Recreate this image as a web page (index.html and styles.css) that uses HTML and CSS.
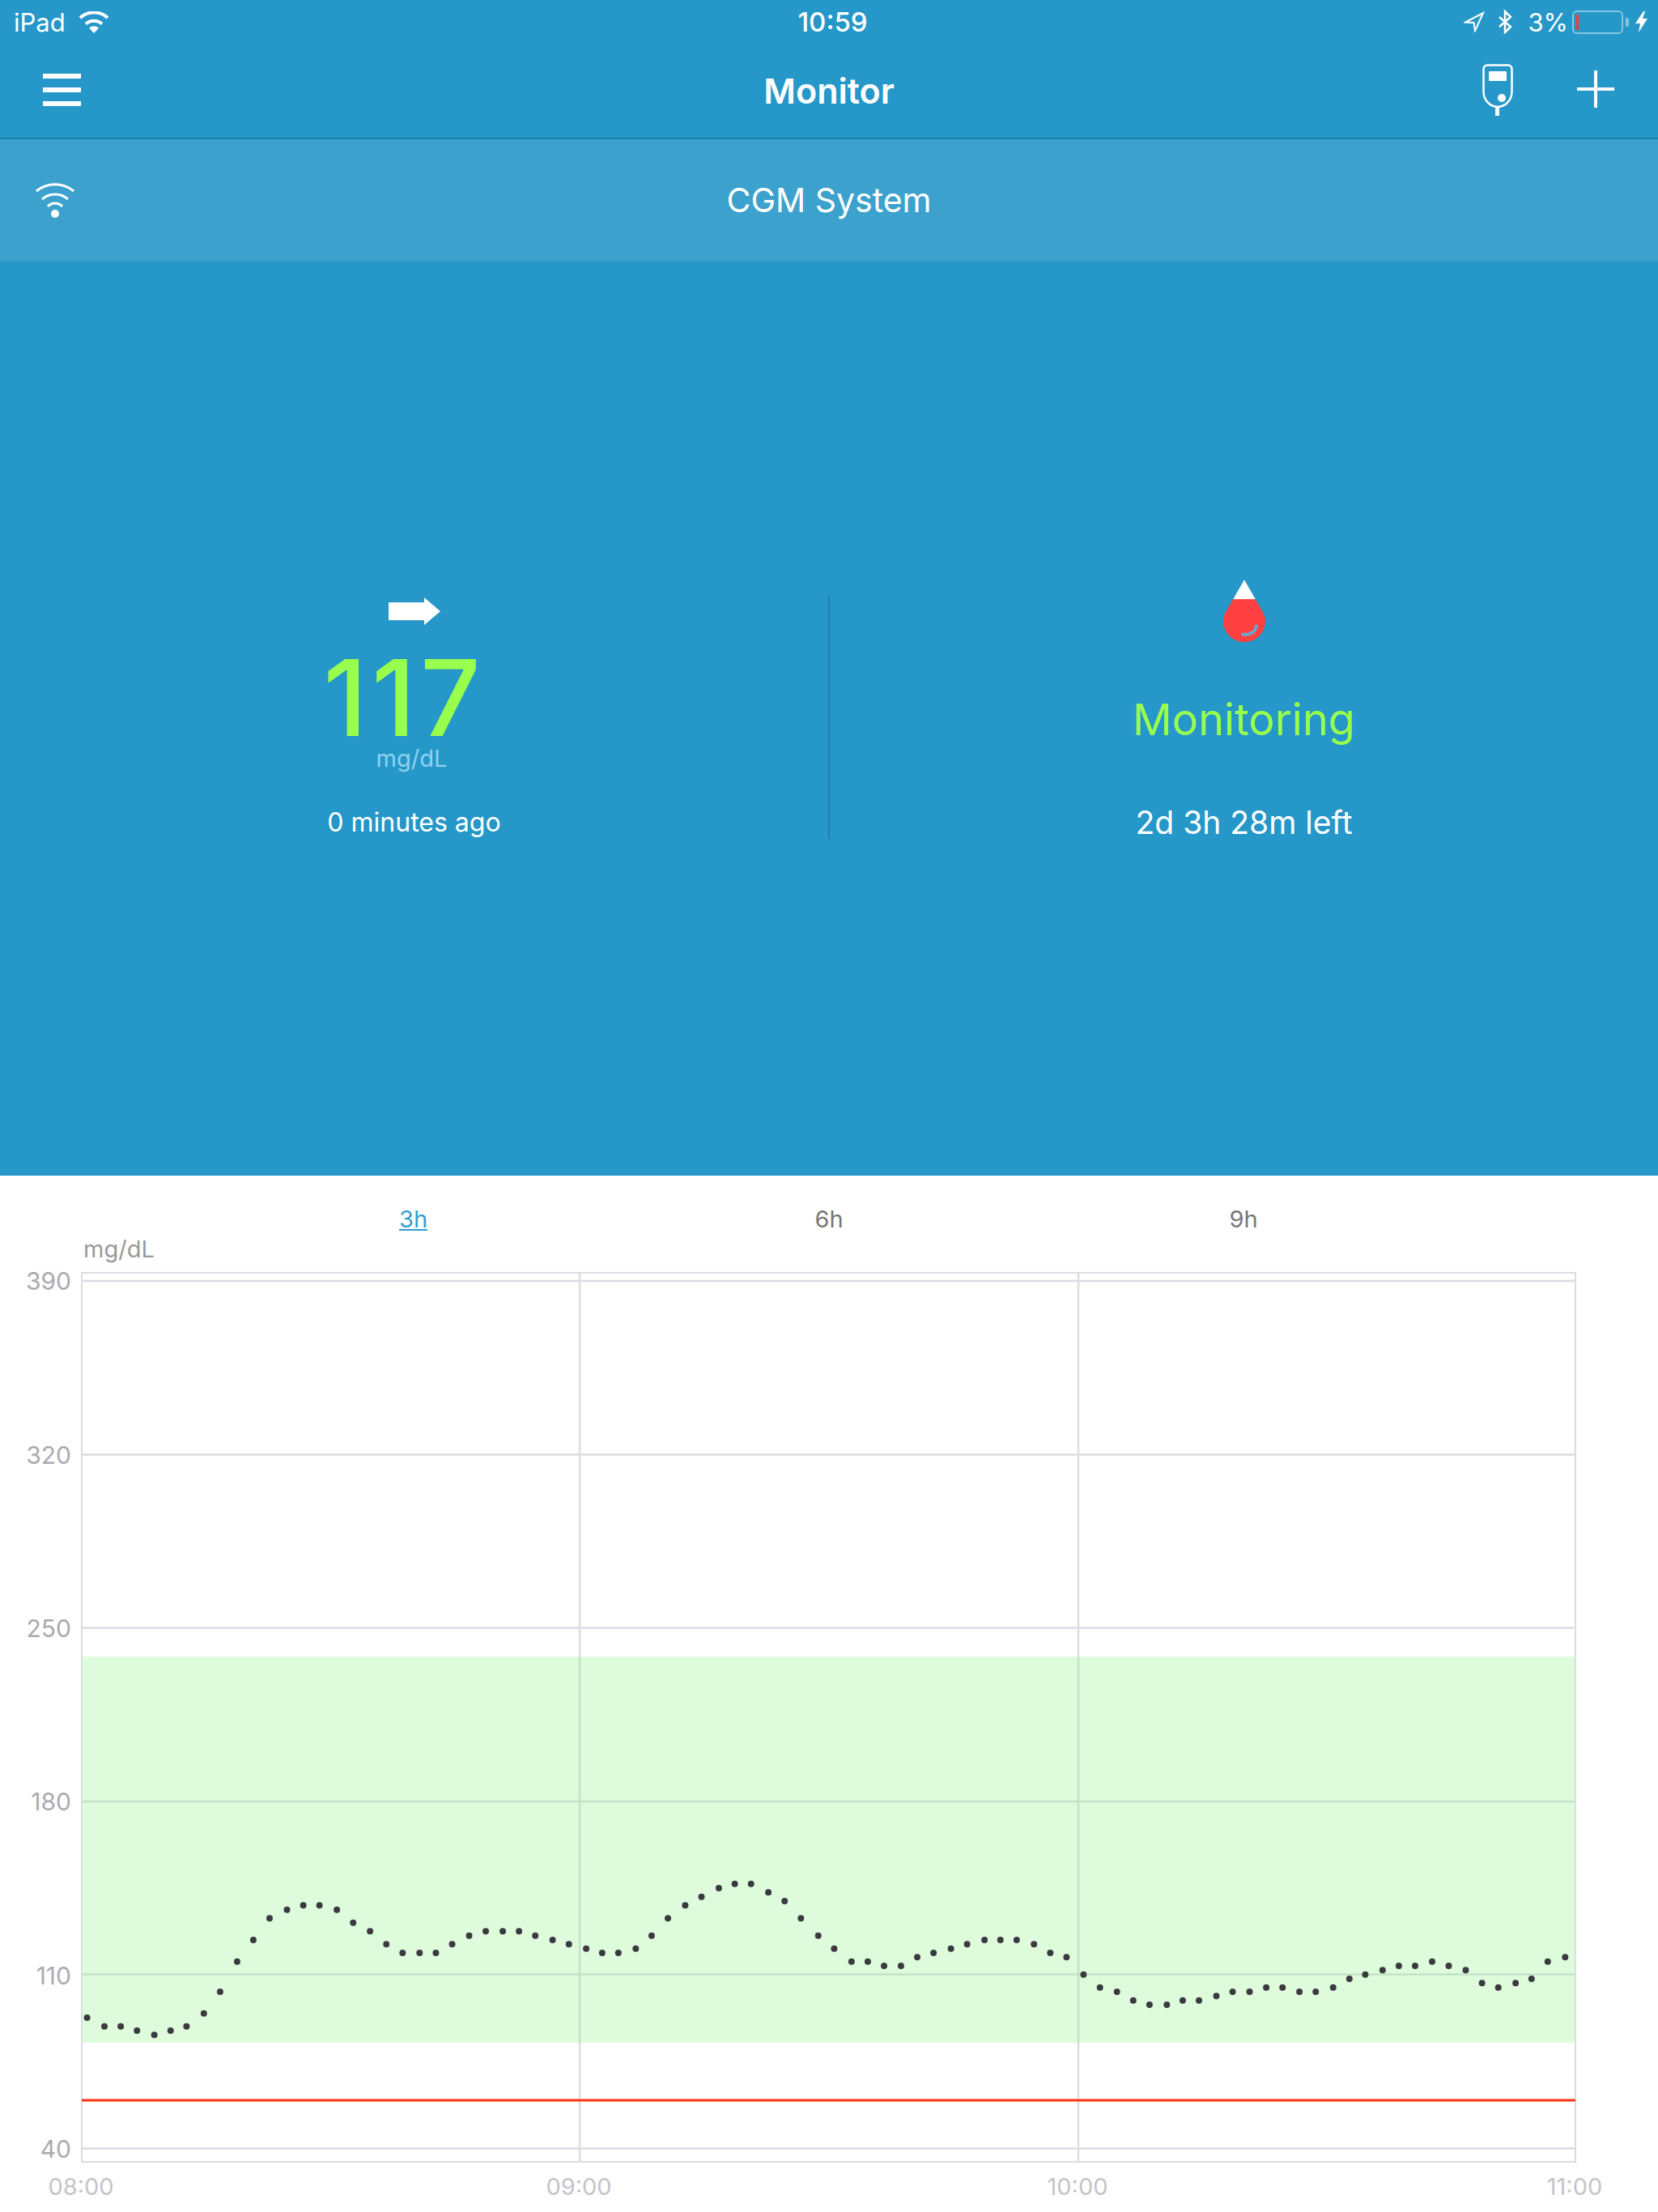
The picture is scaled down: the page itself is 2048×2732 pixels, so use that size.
FILE: index.html
```html
<!DOCTYPE html>
<html lang="en">

<head>
    <meta charset="UTF-8">
    <meta name="viewport" content="width=device-width, initial-scale=1.0">
    <title>Monitor</title>
    <link rel="stylesheet" href="styles.css">
</head>

<body>
    <div class="app">
        <div class="status-bar">
            <div class="status-left">
                <span>iPad</span>
                <svg class="status-wifi" width="38" height="27" viewBox="0 0 38 27">
                    <path class="line" stroke-width="4" d="M2 8A25 25 0 0 1 36 8"/>
                    <path class="line" stroke-width="4" d="M9 15.500A15 15 0 0 1 29 15.500"/>
                    <path class="solid" d="M13 20.500A9 9 0 0 1 25 20.500L19 27Z"/>
                </svg>
            </div>
            <div class="status-time">10:59</div>
            <div class="status-right">
                <svg width="26" height="26" viewBox="0 0 26 26">
                    <path class="line" stroke-width="2" d="M2 13.500L24 2L14 24L12.500 14Z"/>
                </svg>
                <svg class="status-bt" width="18" height="30" viewBox="0 0 18 30">
                    <path class="line" stroke-width="2.500" d="M2 9L16 21L9 28V2L16 9L2 21"/>
                </svg>
                <span class="status-pct">3%</span>
                <div class="battery"><div class="battery-level"></div></div>
                <div class="battery-nub"></div>
                <svg class="status-bolt" width="15" height="26" viewBox="0 0 15 26">
                    <path class="solid" d="M10 0L0 15H6L4 26L15 9H9L12 0Z"/>
                </svg>
            </div>
        </div>

        <div class="nav-bar">
            <div class="menu-icon"><span></span><span></span><span></span></div>
            <div class="nav-title">Monitor</div>
            <svg class="device-icon" width="38" height="64" viewBox="0 0 38 64">
                <path class="line" stroke-width="2.500" d="M6 1.500H32A4.500 4.500 0 0 1 36.500 6V34A17.500 19 0 0 1 1.500 34V6A4.500 4.500 0 0 1 6 1.500Z"/>
                <rect class="solid" x="8" y="9" width="22" height="12" rx="1"/>
                <circle class="solid" cx="24" cy="42" r="5"/>
                <rect class="solid" x="16" y="53" width="5" height="11"/>
            </svg>
            <svg class="plus-icon" width="48" height="48" viewBox="0 0 48 48">
                <path class="line" stroke-width="4" d="M24 1V47M1 24H47"/>
            </svg>
        </div>

        <div class="system-bar">
            <svg class="system-wifi" width="50" height="46" viewBox="0 0 50 46">
                <path class="line" stroke-width="3" d="M2 12A36 36 0 0 1 48 12"/>
                <path class="line" stroke-width="3" d="M9 22A24 24 0 0 1 41 22"/>
                <path class="line" stroke-width="3" d="M16 31A12 12 0 0 1 34 31"/>
                <circle class="solid" cx="25" cy="40" r="5"/>
            </svg>
            <span>CGM System</span>
        </div>

        <div class="monitor">
            <div class="panel">
                <svg class="trend-arrow" width="64" height="34" viewBox="0 0 64 34">
                    <path class="solid" d="M0 6H44V0L64 17L44 34V28H0Z"/>
                </svg>
                <div class="reading">117</div>
                <div class="unit">mg/dL</div>
                <div class="panel-note">0 minutes ago</div>
            </div>
            <div class="divider"></div>
            <div class="panel">
                <svg width="52" height="77" viewBox="0 0 52 77">
                    <path class="solid" d="M26 0L39.700 24H12.300Z"/>
                    <path class="drop-red" d="M12.300 24H39.700L46 35C50 41 52 46 52 51A26 26 0 0 1 0 51C0 46 2 41 6 35Z"/>
                    <path class="drop-shine" d="M24 67.500C32 69 40 65 41 57"/>
                </svg>
                <div class="state">Monitoring</div>
                <div class="state-note">2d 3h 28m left</div>
            </div>
        </div>

        <div class="range-tabs">
            <a class="range-tab active">3h</a>
            <a class="range-tab">6h</a>
            <a class="range-tab">9h</a>
        </div>

        <svg class="chart" width="2048" height="1210" viewBox="0 1522 2048 1210">
            <text class="axis-unit" x="103" y="1553">mg/dL</text>

            <rect class="frame" x="101" y="1572" width="1845" height="1098"/>
            <path class="grid" d="M101 1582H1946M101 1796.500H1946M101 2010.500H1946M101 2225H1946M101 2438.500H1946M101 2653.500H1946"/>
            <path class="grid" d="M716 1572V2670M1332 1572V2670"/>
            <rect class="target-band" x="102" y="2046" width="1843" height="477"/>
            <path class="low-line" d="M101 2594H1946"/>

            <text class="axis-y" x="88" y="1593">390</text>
            <text class="axis-y" x="88" y="1808">320</text>
            <text class="axis-y" x="88" y="2022">250</text>
            <text class="axis-y" x="88" y="2236">180</text>
            <text class="axis-y" x="88" y="2451">110</text>
            <text class="axis-y" x="88" y="2665">40</text>

            <text class="axis-x" x="100" y="2711">08:00</text>
            <text class="axis-x" x="715" y="2711">09:00</text>
            <text class="axis-x" x="1331" y="2711">10:00</text>
            <text class="axis-x" x="1945" y="2711">11:00</text>

            <path class="readings" d="M107.600 2492h0M129 2502.700h0M149.100 2502.700h0M169.200 2508h0M190.600 2513.300h0M210.700 2508h0M230.400 2502.700h0M251.800 2486.700h0M271.900 2460h0M292.900 2422.700h0
                M312.900 2396h0M333 2369.300h0M354.500 2358.700h0M374.600 2353.300h0M394.600 2353.300h0M416.100 2358.700h0M436.200 2374.700h0M457.100 2385.300h0M477.200 2401.300h0M497.300 2412h0
                M518.300 2412h0M538.400 2412h0M558.500 2401.300h0M579.500 2390.700h0M600 2385.300h0M621 2385.300h0M641.100 2385.300h0M661.200 2390.700h0M682.600 2396h0M702.700 2401.300h0
                M724.100 2406.700h0M743.800 2412h0M763.800 2412h0M785.300 2406.700h0M804.900 2390.700h0M825 2369.300h0M846.400 2353.300h0M866.500 2342.700h0M887.900 2332h0M907.600 2326.700h0
                M927.700 2326.700h0M949.100 2337.300h0M969.200 2348h0M989.300 2369.300h0M1010.700 2390.700h0M1030.400 2406.700h0M1051.800 2422.700h0M1071.900 2422.700h0M1092 2428h0M1112.900 2428h0
                M1133 2417.300h0M1153.100 2412h0M1174.600 2406.700h0M1194.600 2401.300h0M1216.100 2396h0M1235.700 2396h0M1255.800 2396h0M1277.200 2401.300h0M1297.300 2412h0M1317.400 2417.300h0
                M1338.400 2438.700h0M1358.700 2454.700h0M1379.700 2460h0M1399.800 2470.700h0M1419.900 2476h0M1441.300 2476h0M1460.900 2470.700h0M1481 2470.700h0M1502.500 2465.300h0M1522.600 2460h0
                M1543.500 2460h0M1564.100 2454.700h0M1584.200 2454.700h0M1605.100 2460h0M1625.200 2460h0M1646.700 2454.700h0M1666.800 2444h0M1686.400 2438.700h0M1707.800 2433.300h0M1727.900 2428h0
                M1748 2428h0M1769 2422.700h0M1789.500 2428h0M1810.500 2433.300h0M1830.600 2449.300h0M1850.700 2454.700h0M1872.100 2449.300h0M1891.800 2444h0M1911.800 2422.700h0M1933.300 2417.300h0"/>
        </svg>
    </div>
</body>

</html>
```

FILE: styles.css
```css
body {
    margin: 0;
    background: #fff;
    font-family: Inter, "Liberation Sans", sans-serif;
}

.app {
    width: 2048px;
    height: 2732px;
    overflow: hidden;
    display: flex;
    flex-direction: column;
}

.line {
    fill: none;
    stroke: #fff;
}

.solid {
    fill: #fff;
}

/* status bar */
.status-bar {
    height: 54px;
    flex-shrink: 0;
    background: #2597c8;
    color: #fff;
    font-size: 31px;
    display: grid;
    grid-template-columns: 1fr auto 1fr;
    align-items: center;
    padding: 0 13px 0 17px;
}

.status-left {
    display: flex;
    align-items: center;
    gap: 16px;
}

.status-time {
    font-size: 33px;
    font-weight: 500;
    padding-left: 5px;
}

.status-right {
    display: flex;
    align-items: center;
    justify-content: flex-end;
}

.status-bt {
    margin-left: 16px;
}

.status-pct {
    margin-left: 19px;
    margin-right: 5px;
}

.battery {
    width: 63px;
    height: 29px;
    box-sizing: border-box;
    padding: 3px;
    border: 2px solid rgba(255, 255, 255, 0.45);
    border-radius: 6px;
}

.battery-level {
    width: 3px;
    height: 100%;
    background: #ff3b30;
}

.battery-nub {
    width: 4px;
    height: 11px;
    margin-left: 3px;
    background: rgba(255, 255, 255, 0.45);
    border-radius: 0 3px 3px 0;
}

.status-bolt {
    margin-left: 8px;
}

/* nav */
.nav-bar {
    height: 118px;
    flex-shrink: 0;
    box-sizing: border-box;
    background: #2597c8;
    border-bottom: 2px solid #1f7ea8;
    display: flex;
    align-items: center;
    padding: 0 53px;
}

.menu-icon {
    width: 47px;
    margin-top: -2px;
    display: flex;
    flex-direction: column;
    gap: 11px;
}

.menu-icon span {
    height: 6px;
    background: #fff;
}

.nav-title {
    flex: 1;
    text-align: center;
    color: #fff;
    font-size: 43px;
    font-weight: 600;
    padding-left: 117px;
}

.device-icon {
    margin: -3px 78px 0 0;
}

.plus-icon {
    margin-top: -4px;
}

.system-bar {
    height: 151px;
    flex-shrink: 0;
    box-sizing: border-box;
    padding-bottom: 2px;
    background: #3ca2cd;
    color: #fff;
    font-size: 41px;
    display: flex;
    align-items: center;
    justify-content: center;
    position: relative;
}

.system-wifi {
    position: absolute;
    left: 43px;
    top: 52px;
}

/* readings */
.monitor {
    height: 1129px;
    flex-shrink: 0;
    background: #2597c8;
    display: flex;
    align-items: center;
}

.panel {
    flex: 1;
    height: 343px;
    display: flex;
    flex-direction: column;
    align-items: center;
}

.divider {
    width: 2px;
    height: 300px;
    margin-top: -3px;
    background: #1f80ab;
}

.trend-arrow {
    margin-top: 22px;
}

.reading {
    color: #99ff4d;
    font-size: 130px;
    font-weight: 500;
    line-height: 100px;
    margin: 40px 24px 0 0;
    letter-spacing: 6px;
}

.unit {
    color: #8fd3f0;
    font-size: 29px;
    line-height: 34px;
    margin: 8px 6px 0 0;
}

.panel-note {
    color: #fff;
    font-size: 32px;
    line-height: 40px;
    margin-top: 42px;
}

.state {
    color: #99ff4d;
    font-size: 54px;
    line-height: 66px;
    margin-top: 63px;
}

.state-note {
    color: #fff;
    font-size: 39px;
    line-height: 46px;
    margin-top: 71px;
}

.drop-red {
    fill: #ff4040;
}

.drop-shine {
    fill: none;
    stroke: #6aa6c9;
    stroke-width: 4;
    stroke-linecap: round;
}

/* chart */
.range-tabs {
    height: 70px;
    flex-shrink: 0;
    box-sizing: border-box;
    padding: 36px 256px 0;
    display: grid;
    grid-template-columns: repeat(3, 1fr);
    text-align: center;
    font-size: 29px;
    line-height: 36px;
    color: #777;
}

.range-tab.active {
    color: #2f9fd0;
    text-decoration: underline;
    padding-right: 3px;
}

.chart {
    display: block;
    flex-shrink: 0;
}

.frame {
    fill: #fff;
    stroke: #dcdce2;
    stroke-width: 2;
}

.grid {
    fill: none;
    stroke: #dcdce2;
    stroke-width: 2.500;
}

.target-band {
    fill: rgba(125, 245, 115, 0.25);
}

.low-line {
    stroke: #ff3010;
    stroke-width: 3;
}

.readings {
    fill: none;
    stroke: #3a3a40;
    stroke-width: 8;
    stroke-linecap: round;
}

.axis-unit {
    font-size: 29px;
    fill: #999;
}

.axis-y {
    font-size: 30px;
    fill: #aaaab0;
    text-anchor: end;
}

.axis-x {
    font-size: 29px;
    fill: #c4c4ca;
    text-anchor: middle;
}
```
